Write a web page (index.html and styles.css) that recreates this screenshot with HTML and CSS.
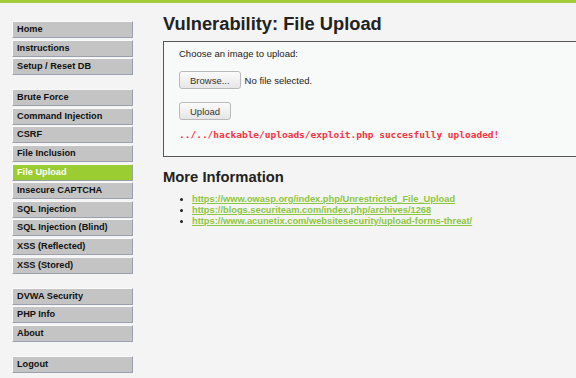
FILE: index.html
```html
<!DOCTYPE html>
<html lang="en">
<head>
    <meta charset="UTF-8">
    <title>Vulnerability: File Upload</title>
    <link rel="stylesheet" href="styles.css">
</head>
<body>
    <div class="page">
        <div class="menu">
            <ul class="menu-group">
                <li><a href="#">Home</a></li>
                <li><a href="#">Instructions</a></li>
                <li><a href="#">Setup / Reset DB</a></li>
            </ul>
            <ul class="menu-group">
                <li><a href="#">Brute Force</a></li>
                <li><a href="#">Command Injection</a></li>
                <li><a href="#">CSRF</a></li>
                <li><a href="#">File Inclusion</a></li>
                <li class="selected"><a href="#">File Upload</a></li>
                <li><a href="#">Insecure CAPTCHA</a></li>
                <li><a href="#">SQL Injection</a></li>
                <li><a href="#">SQL Injection (Blind)</a></li>
                <li><a href="#">XSS (Reflected)</a></li>
                <li><a href="#">XSS (Stored)</a></li>
            </ul>
            <ul class="menu-group">
                <li><a href="#">DVWA Security</a></li>
                <li><a href="#">PHP Info</a></li>
                <li><a href="#">About</a></li>
            </ul>
            <ul class="menu-group">
                <li><a href="#">Logout</a></li>
            </ul>
        </div>

        <div class="main">
            <h1>Vulnerability: File Upload</h1>
            <div class="vulnerable-code">
                <form>
                    <p class="label">Choose an image to upload:</p>
                    <div class="file-row">
                        <button type="button" class="btn">Browse...</button>
                        <span>No file selected.</span>
                    </div>
                    <button type="button" class="btn">Upload</button>
                </form>
                <pre class="result">../../hackable/uploads/exploit.php succesfully uploaded!</pre>
            </div>

            <h2>More Information</h2>
            <ul class="links">
                <li><a href="#">https://www.owasp.org/index.php/Unrestricted_File_Upload</a></li>
                <li><a href="#">https://blogs.securiteam.com/index.php/archives/1268</a></li>
                <li><a href="#">https://www.acunetix.com/websitesecurity/upload-forms-threat/</a></li>
            </ul>
        </div>
    </div>
</body>
</html>
```

FILE: styles.css
```css
body {
    margin: 0;
    background-color: #f4f4f4;
    border-top: 3px solid #a3cc3c;
    font-family: 'Liberation Sans', Arial, sans-serif;
    color: #222;
    height: 375px;
    overflow: hidden;
}
.page {
    display: flex;
}
.menu {
    width: 121px;
    padding: 18px 0 0 12px;
    flex-shrink: 0;
}
.menu-group {
    list-style: none;
    margin: 0 0 14.1px 0;
    padding: 0;
}
.menu-group li {
    margin-bottom: 1.6px;
}
.menu-group a {
    display: block;
    height: 15px;
    line-height: 15px;
    padding-left: 4px;
    background-color: #c4c4c4;
    border-top: 1px solid #fafafa;
    border-left: 1px solid #fafafa;
    border-right: 1px solid #9ba0ae;
    border-bottom: 1px solid #9ba0ae;
    color: #111;
    font-size: 9.2px;
    font-weight: bold;
    text-decoration: none;
}
.menu-group li.selected a {
    background-color: #9acd32;
    color: #fff;
}
.main {
    margin-left: 30px;
    flex: 1;
}
h1 {
    margin: 9px 0 5px 0;
    font-size: 18.3px;
    line-height: 24px;
    font-weight: bold;
    color: #222;
}
.vulnerable-code {
    background-color: #f8f9f9;
    border: 1px solid #555;
    border-right: none;
    padding: 6px 15px 15px 15px;
}
.label {
    margin: 0 0 11px 0;
    font-size: 9.5px;
    line-height: 12px;
    color: #222;
}
.file-row {
    display: flex;
    align-items: center;
    gap: 4px;
    margin-bottom: 13px;
    font-size: 9.5px;
}
.btn {
    display: block;
    height: 18px;
    padding: 0 10px;
    border: 1px solid #b9b9b9;
    border-radius: 3px;
    background: linear-gradient(#fbfbfb, #e6e6e6);
    font-family: 'Liberation Sans', Arial, sans-serif;
    font-size: 9.5px;
    color: #333;
}
.result {
    margin: 9px 0 0 0;
    font-family: 'DejaVu Sans Mono', monospace;
    font-size: 9.5px;
    line-height: 12px;
    font-weight: bold;
    color: #f5333f;
}
h2 {
    margin: 11px 0 8px 0;
    font-size: 14.8px;
    line-height: 18px;
    font-weight: bold;
    color: #222;
}
.links {
    margin: 0;
    padding-left: 29px;
    font-size: 9.3px;
    line-height: 11px;
}
.links a {
    color: #8dc63f;
    font-weight: bold;
}
```
